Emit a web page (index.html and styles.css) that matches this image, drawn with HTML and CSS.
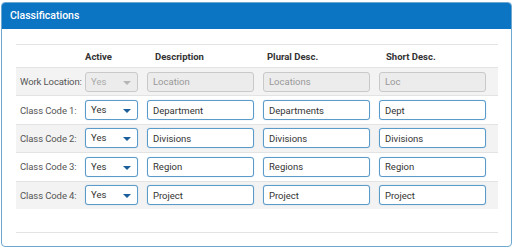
FILE: index.html
```html
<!DOCTYPE html>
<html lang="en">
<head>
  <meta charset="UTF-8">
  <title>Classifications</title>
  <link rel="stylesheet" href="styles.css">
</head>
<body>
  <div class="panel">
    <div class="panel-head">Classifications</div>
    <div class="panel-body">
      <div class="grid">
        <div class="row head">
          <div></div>
          <div class="th">Active</div>
          <div class="th th-desc">Description</div>
          <div class="th th-plural">Plural Desc.</div>
          <div class="th th-short">Short Desc.</div>
        </div>

        <div class="row striped">
          <div class="label">Work Location:</div>
          <div><div class="select disabled">Yes<span class="caret"></span></div></div>
          <div><input class="field" value="Location" disabled></div>
          <div><input class="field" value="Locations" disabled></div>
          <div><input class="field" value="Loc" disabled></div>
        </div>

        <div class="row">
          <div class="label">Class Code 1:</div>
          <div><div class="select">Yes<span class="caret"></span></div></div>
          <div><input class="field" value="Department"></div>
          <div><input class="field" value="Departments"></div>
          <div><input class="field" value="Dept"></div>
        </div>

        <div class="row striped">
          <div class="label">Class Code 2:</div>
          <div><div class="select">Yes<span class="caret"></span></div></div>
          <div><input class="field" value="Divisions"></div>
          <div><input class="field" value="Divisions"></div>
          <div><input class="field" value="Divisions"></div>
        </div>

        <div class="row">
          <div class="label">Class Code 3:</div>
          <div><div class="select">Yes<span class="caret"></span></div></div>
          <div><input class="field" value="Region"></div>
          <div><input class="field" value="Regions"></div>
          <div><input class="field" value="Region"></div>
        </div>

        <div class="row striped">
          <div class="label">Class Code 4:</div>
          <div><div class="select">Yes<span class="caret"></span></div></div>
          <div><input class="field" value="Project"></div>
          <div><input class="field" value="Project"></div>
          <div><input class="field" value="Project"></div>
        </div>

        <div class="row foot"></div>
      </div>
    </div>
  </div>
</body>
</html>
```

FILE: styles.css
```css
body { margin: 0; background: #fff; font-family: Roboto, "Liberation Sans", sans-serif; font-size: 9.5px; color: #333; }

.panel { margin: 2px 0 0 1px; width: 511px; height: 245px; box-sizing: border-box; border: 1px solid #6ea7d0; border-radius: 4px; overflow: hidden; }
.panel-head { height: 26px; background: #0b74c3; color: #fff; font-size: 10.5px; font-weight: 500; line-height: 25px; padding-left: 8px; }
.panel-body { padding: 15px 13px 0 14px; }

.row { display: grid; grid-template-columns: 65px 62px 116px 116px 122px; align-items: center; height: 28.4px; box-sizing: border-box; border-top: 1px solid #e3e3e3; white-space: nowrap; }
.row > div { padding-left: 4px; }
.row.head { height: 23px; }
.row.striped { background: #f3f3f3; }
.row.foot { height: 14px; margin-top: 23px; }

.th { font-weight: bold; color: #333; }
.th-desc { padding-left: 12px !important; }
.th-plural { padding-left: 8px !important; }
.th-short { padding-left: 11px !important; }
.label { color: #555; letter-spacing: -0.1px; }

.field { width: 107px; height: 20px; box-sizing: border-box; margin: 0; border: 1px solid #5a9bca; border-radius: 3px; padding: 0 5px; font: 9.5px Roboto, "Liberation Sans", sans-serif; color: #333; background: #fff; box-shadow: 0 0 1px rgba(90, 155, 202, 0.6); }
.field:disabled { background: #ececec; border-color: #c9c9c9; color: #999; box-shadow: none; }

.select { position: relative; width: 53px; height: 20px; box-sizing: border-box; border: 1px solid #5a9bca; border-radius: 3px; padding-left: 5px; line-height: 18px; color: #333; background: #fff; box-shadow: 0 0 1px rgba(90, 155, 202, 0.6); }
.select.disabled { background: #ececec; border-color: #c9c9c9; color: #aaa; box-shadow: none; }
.caret { position: absolute; right: 6px; top: 8px; border-left: 4px solid transparent; border-right: 4px solid transparent; border-top: 4px solid #1b5e9c; }
.select.disabled .caret { border-top-color: #b5b5b5; }
```
